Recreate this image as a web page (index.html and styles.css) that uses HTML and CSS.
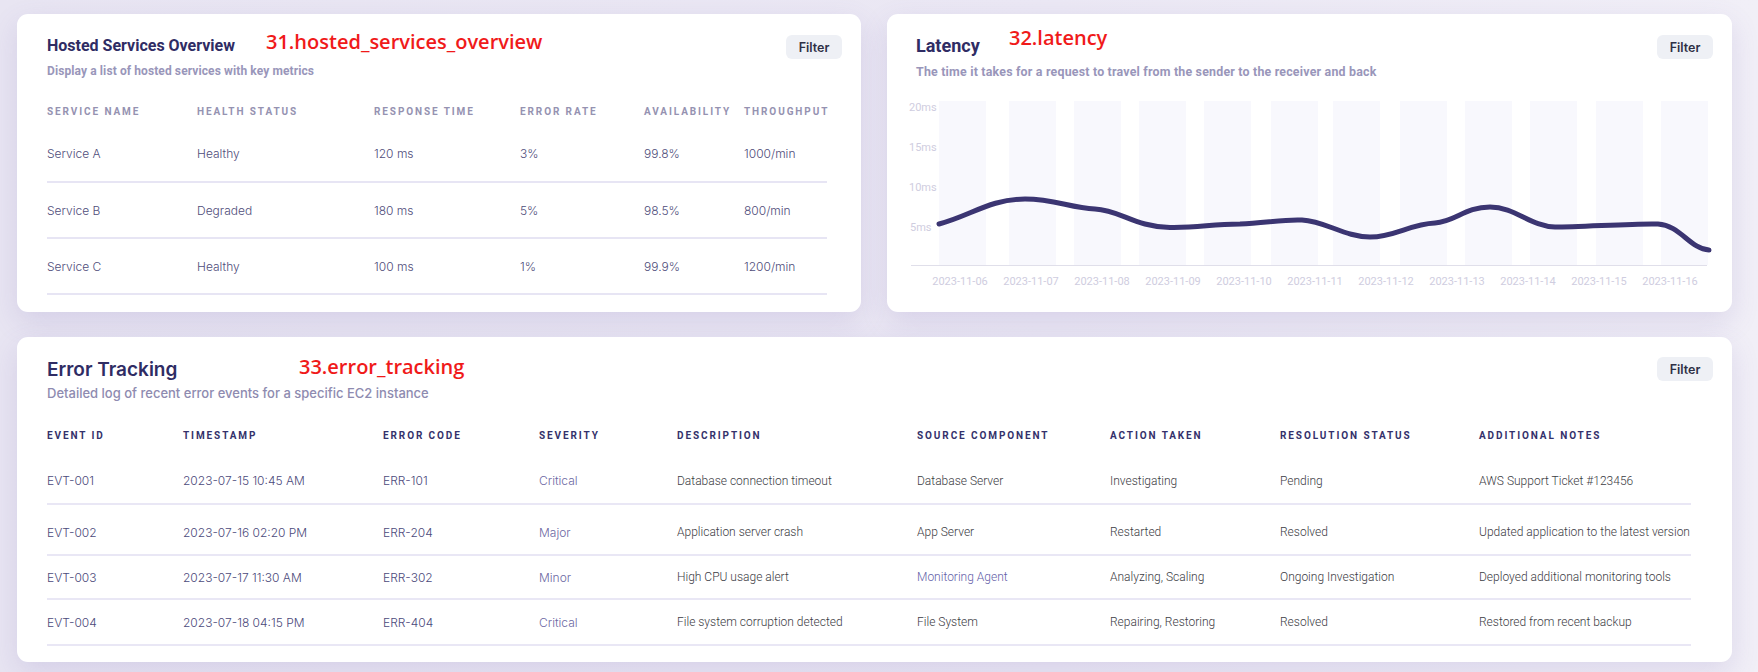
FILE: index.html
```html
<!DOCTYPE html>
<html lang="en">
<head>
<meta charset="utf-8">
<title>Dashboard</title>
<link rel="stylesheet" href="styles.css">
</head>
<body>
<main class="page">
  <section class="card card-hosted">
    <span class="tag tag-31">31.hosted_services_overview</span>
    <header class="card-head">
      <div>
        <h2 class="title">Hosted Services Overview</h2>
        <p class="subtitle">Display a list of hosted services with key metrics</p>
      </div>
      <button class="filter">Filter</button>
    </header>
    <table class="tbl tbl-hosted">
      <colgroup>
        <col class="h1"><col class="h2"><col class="h3"><col class="h4"><col class="h5"><col class="h6">
      </colgroup>
      <thead>
        <tr><th>Service Name</th><th>Health Status</th><th>Response Time</th><th>Error Rate</th><th>Availability</th><th>Throughput</th></tr>
      </thead>
      <tbody>
        <tr><td>Service A</td><td>Healthy</td><td>120 ms</td><td>3%</td><td>99.8%</td><td>1000/min</td></tr>
        <tr><td>Service B</td><td>Degraded</td><td>180 ms</td><td>5%</td><td>98.5%</td><td>800/min</td></tr>
        <tr><td>Service C</td><td>Healthy</td><td>100 ms</td><td>1%</td><td>99.9%</td><td>1200/min</td></tr>
      </tbody>
    </table>
  </section>

  <section class="card card-latency">
    <span class="tag tag-32">32.latency</span>
    <header class="card-head">
      <div>
        <h2 class="title title-lg">Latency</h2>
        <p class="subtitle subtitle-lat">The time it takes for a request to travel from the sender to the receiver and back</p>
      </div>
      <button class="filter">Filter</button>
    </header>
    <svg class="chart" viewBox="0 0 845 208" width="845" height="208" aria-label="Latency chart">
      <g transform="translate(-887 -92)">
        <g class="bands">
          <rect x="939" y="101" width="47" height="164"/>
          <rect x="1009" y="101" width="47" height="164"/>
          <rect x="1074" y="101" width="47" height="164"/>
          <rect x="1139" y="101" width="47" height="164"/>
          <rect x="1204" y="101" width="47" height="164"/>
          <rect x="1271" y="101" width="47" height="164"/>
          <rect x="1333" y="101" width="47" height="164"/>
          <rect x="1400" y="101" width="47" height="164"/>
          <rect x="1465" y="101" width="47" height="164"/>
          <rect x="1530" y="101" width="47" height="164"/>
          <rect x="1596" y="101" width="47" height="164"/>
          <rect x="1661" y="101" width="47" height="164"/>
        </g>
        <line class="axis" x1="911" y1="265.5" x2="1707" y2="265.5"/>
        <g class="ylab">
          <text x="909" y="111">20ms</text>
          <text x="909" y="151">15ms</text>
          <text x="909" y="191">10ms</text>
          <text x="910" y="231">5ms</text>
        </g>
        <g class="xlab">
          <text x="960" y="285">2023-11-06</text>
          <text x="1031" y="285">2023-11-07</text>
          <text x="1102" y="285">2023-11-08</text>
          <text x="1173" y="285">2023-11-09</text>
          <text x="1244" y="285">2023-11-10</text>
          <text x="1315" y="285">2023-11-11</text>
          <text x="1386" y="285">2023-11-12</text>
          <text x="1457" y="285">2023-11-13</text>
          <text x="1528" y="285">2023-11-14</text>
          <text x="1599" y="285">2023-11-15</text>
          <text x="1670" y="285">2023-11-16</text>
        </g>
        <path class="line" d="M939,224 C970,216 990,199 1025,199 C1055,199 1070,208 1095,209 C1120,210 1135,227 1170,227.5 C1200,228 1210,224 1240,224 C1265,223 1285,219 1302,220 C1325,221 1345,237 1370,237 C1395,237 1410,224 1435,223 C1455,222 1465,207 1490,207 C1515,207 1530,226 1555,227 C1580,227 1640,223 1658,224 C1680,225 1690,249 1709,250"/>
      </g>
    </svg>
  </section>

  <section class="card card-errors">
    <span class="tag tag-33">33.error_tracking</span>
    <header class="card-head">
      <div>
        <h2 class="title-err">Error Tracking</h2>
        <p class="subtitle-err">Detailed log of recent error events for a specific EC2 instance</p>
      </div>
      <button class="filter filter-err">Filter</button>
    </header>
    <table class="tbl tbl-err">
      <colgroup>
        <col class="e1"><col class="e2"><col class="e3"><col class="e4"><col class="e5"><col class="e6"><col class="e7"><col class="e8"><col class="e9">
      </colgroup>
      <thead>
        <tr><th>Event ID</th><th>Timestamp</th><th>Error Code</th><th>Severity</th><th>Description</th><th>Source Component</th><th>Action Taken</th><th>Resolution Status</th><th>Additional Notes</th></tr>
      </thead>
      <tbody>
        <tr><td class="geo">EVT-001</td><td class="geo">2023-07-15 10:45 AM</td><td class="geo">ERR-101</td><td class="geo sev">Critical</td><td class="plain">Database connection timeout</td><td class="plain">Database Server</td><td class="plain">Investigating</td><td class="plain">Pending</td><td class="plain">AWS Support Ticket #123456</td></tr>
        <tr><td class="geo">EVT-002</td><td class="geo">2023-07-16 02:20 PM</td><td class="geo">ERR-204</td><td class="geo sev">Major</td><td class="plain">Application server crash</td><td class="plain">App Server</td><td class="plain">Restarted</td><td class="plain">Resolved</td><td class="plain">Updated application to the latest version</td></tr>
        <tr><td class="geo">EVT-003</td><td class="geo">2023-07-17 11:30 AM</td><td class="geo">ERR-302</td><td class="geo sev">Minor</td><td class="plain">High CPU usage alert</td><td class="plain accent">Monitoring Agent</td><td class="plain">Analyzing, Scaling</td><td class="plain">Ongoing Investigation</td><td class="plain">Deployed additional monitoring tools</td></tr>
        <tr><td class="geo">EVT-004</td><td class="geo">2023-07-18 04:15 PM</td><td class="geo">ERR-404</td><td class="geo sev">Critical</td><td class="plain">File system corruption detected</td><td class="plain">File System</td><td class="plain">Repairing, Restoring</td><td class="plain">Resolved</td><td class="plain">Restored from recent backup</td></tr>
      </tbody>
    </table>
  </section>
</main>
</body>
</html>
```

FILE: styles.css
```css
* { box-sizing: border-box; }

html, body {
  margin: 0;
  padding: 0;
}

body {
  width: 1758px;
  height: 672px;
  overflow: hidden;
  background: linear-gradient(90deg, #e8e5f2 0%, #ebe8f4 60%, #f1eff7 100%);
  font-family: "Roboto", "Liberation Sans", sans-serif;
  color: #2f2c64;
}

.page {
  display: grid;
  grid-template-columns: 844px 845px;
  column-gap: 26px;
  row-gap: 25px;
  padding: 14px 27px 0 17px;
}

.card {
  position: relative;
  background: #ffffff;
  border-radius: 11px;
  box-shadow: 0 10px 28px rgba(112, 92, 176, 0.16);
}

.card-hosted {
  height: 298px;
  padding: 21px 19px 18px 30px;
}

.card-latency {
  height: 298px;
  padding: 21px 19px 0 29px;
  overflow: hidden;
}

.card-errors {
  grid-column: 1 / span 2;
  height: 325px;
  padding: 21px 19px 17px 30px;
}

.card-head {
  display: flex;
  justify-content: space-between;
  align-items: flex-start;
}

.title {
  margin: 0;
  font-family: "Roboto", sans-serif;
  font-weight: 700;
  font-size: 16px;
  line-height: 22px;
  color: #2f2c64;
}

.title-lg {
  font-size: 18px;
}

.subtitle {
  margin: 6px 0 0;
  font-family: "Roboto", sans-serif;
  font-weight: 700;
  font-size: 12px;
  line-height: 16px;
  letter-spacing: 0.1px;
  color: #9996ba;
}

.subtitle-lat {
  margin-top: 7px;
  font-weight: 700;
  font-size: 12.4px;
  letter-spacing: 0.2px;
}

.title-err {
  margin: 0;
  font-family: "Inter", sans-serif;
  font-weight: 600;
  font-size: 19px;
  line-height: 24px;
  color: #2f2c64;
}

.subtitle-err {
  margin: 2px 0 0;
  font-family: "Inter", sans-serif;
  font-weight: 500;
  font-size: 13px;
  line-height: 18px;
  color: #8e8bb0;
}

.filter {
  width: 56px;
  height: 24px;
  margin: 0;
  padding: 0;
  border: 0;
  border-radius: 6px;
  background: #eef0f5;
  font-family: "Inter", sans-serif;
  font-weight: 600;
  font-size: 12.5px;
  color: #2e3046;
}

.filter-err {
  margin-top: -1px;
}

/* annotations */
.tag {
  position: absolute;
  font-family: "Open Sans", sans-serif;
  font-weight: 600;
  font-size: 20px;
  line-height: 24px;
  color: #f01a1a;
  white-space: nowrap;
}
.tag-31 { left: 249px; top: 16px; }
.tag-32 { left: 122px; top: 12px; }
.tag-33 { left: 282px; top: 18px; }

/* tables */
.tbl {
  border-collapse: collapse;
  table-layout: fixed;
  white-space: nowrap;
}

.tbl th, .tbl td {
  padding: 0;
  text-align: left;
  vertical-align: middle;
  overflow: visible;
}

.tbl th {
  font-family: "Roboto", sans-serif;
  font-weight: 700;
  font-size: 10px;
  letter-spacing: 1.9px;
  text-transform: uppercase;
}

.tbl-hosted {
  width: 780px;
  margin-top: 17px;
}

.tbl-hosted thead tr { height: 30px; }
.tbl-hosted th { color: #9592b1; }

.tbl-hosted td {
  height: 56px;
  border-bottom: 2px solid #e7e5f4;
  font-family: "Inter", sans-serif;
  font-weight: 300;
  font-size: 12px;
  color: #4f4d7a;
}

.h1 { width: 150px; }
.h2 { width: 177px; }
.h3 { width: 146px; }
.h4 { width: 124px; }
.h5 { width: 100px; }
.h6 { width: 83px; }

.tbl-err {
  width: 1644px;
  margin-top: 10px;
}

.tbl-err thead tr { height: 46px; }
.tbl-err th { color: #34316b; }

.tbl-err td {
  height: 46px;
  border-bottom: 2px solid #e9e7f5;
  font-size: 12px;
}

.tbl-err tbody tr:nth-child(2) td {
  height: 51px;
  padding-top: 5px;
}
.tbl-err tbody tr:nth-child(3) td { height: 44px; }

.tbl-err td.geo {
  font-family: "Inter", sans-serif;
  font-weight: 300;
  color: #4c4a7b;
}

.tbl-err td.sev { color: #6c68a3; }

.tbl-err td.plain {
  font-family: "Roboto", sans-serif;
  font-weight: 300;
  font-size: 12px;
  color: #3c3c44;
}

.tbl-err td.accent { color: #6360a8; }

.e1 { width: 136px; }
.e2 { width: 200px; }
.e3 { width: 156px; }
.e4 { width: 138px; }
.e5 { width: 240px; }
.e6 { width: 193px; }
.e7 { width: 170px; }
.e8 { width: 199px; }
.e9 { width: 212px; }

/* chart */
.chart {
  display: block;
  margin: 12px -19px 0 -29px;
}

.bands rect { fill: #f8f8fd; }
.axis { stroke: #e0dfea; stroke-width: 1; }

.ylab text, .xlab text {
  font-family: "Roboto", sans-serif;
  font-size: 11px;
  fill: #cfcde0;
}
.xlab text { text-anchor: middle; }

.line {
  fill: none;
  stroke: #3b3572;
  stroke-width: 5;
  stroke-linecap: round;
  stroke-linejoin: round;
}
```
